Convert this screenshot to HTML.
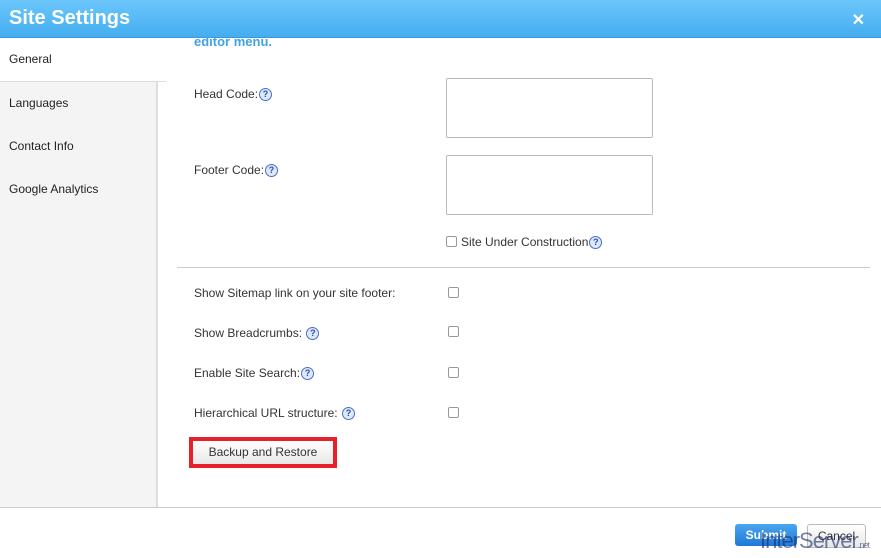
<!DOCTYPE html>
<html><head><style>
body{margin:0;width:881px;height:557px;position:relative;overflow:hidden;font-family:"Liberation Sans",sans-serif;background:#fff;font-size:12px;color:#333}
.hdr{position:absolute;left:0;top:0;width:881px;height:37px;background:linear-gradient(#6cc6fb,#44aef0);border-bottom:1px solid #3a9ad8}
.hdr .t{position:absolute;left:9px;top:7px;font-size:20px;font-weight:bold;color:#fff}
.hdr .x{position:absolute;right:16px;top:10px;font-size:16px;font-weight:bold;color:#fff}
.side{position:absolute;left:0;top:38px;width:156px;height:469px;background:#f4f4f4;border-right:2px solid #ddd}
.tab{height:43px;line-height:43px;padding-left:9px;font-size:12px;color:#222}
.tab.a{background:#fff;border-bottom:1px solid #ddd;width:157px}
.a2{position:absolute;font-size:12px;color:#333}
.q{display:inline-block;width:11px;height:11px;border-radius:50%;border:1px solid #4a6fc0;background:#dde8ff;color:#2a4fa0;font-size:9px;line-height:11px;text-align:center;font-weight:bold;vertical-align:middle;margin-left:1px}
.ta{position:absolute;left:446px;width:205px;height:58px;border:1px solid #bbb;border-radius:2px}
.cb{position:absolute;width:9px;height:9px;border:1px solid #999;border-radius:2px;background:#fff}
.foot{position:absolute;left:0;top:507px;width:881px;height:50px;border-top:1px solid #ccc;background:#fff}
</style></head><body>
<div class="hdr"><div class="t">Site Settings</div><div class="x">✕</div></div>
<div class="side">
<div class="tab a">General</div>
<div class="tab">Languages</div>
<div class="tab">Contact Info</div>
<div class="tab">Google Analytics</div>
</div>
<div class="a2" style="left:194px;top:34px;color:#3ea3e6;font-weight:bold;font-size:13px">editor menu.</div>
<div class="a2" style="left:194px;top:87px">Head Code:<span class="q">?</span></div>
<div class="ta" style="top:78px"></div>
<div class="a2" style="left:194px;top:163px">Footer Code:<span class="q">?</span></div>
<div class="ta" style="top:155px"></div>
<div class="cb" style="left:446px;top:236px"></div>
<div class="a2" style="left:461px;top:235px">Site Under Construction<span class="q">?</span></div>
<div style="position:absolute;left:177px;top:267px;width:693px;height:1px;background:#ccc"></div>
<div class="a2" style="left:194px;top:286px">Show Sitemap link on your site footer:</div>
<div class="cb" style="left:448px;top:287px"></div>
<div class="a2" style="left:194px;top:326px">Show Breadcrumbs: <span class="q">?</span></div>
<div class="cb" style="left:448px;top:326px"></div>
<div class="a2" style="left:194px;top:366px">Enable Site Search:<span class="q">?</span></div>
<div class="cb" style="left:448px;top:367px"></div>
<div class="a2" style="left:194px;top:406px">Hierarchical URL structure: <span class="q">?</span></div>
<div class="cb" style="left:448px;top:407px"></div>
<div style="position:absolute;left:189px;top:437px;width:140px;height:23px;border:4px solid #e8202a;background:linear-gradient(#fff,#e8e8e8);text-align:center;line-height:23px;font-size:12px;color:#333">Backup and Restore</div>
<div class="foot"></div>
<div style="position:absolute;left:735px;top:524px;width:62px;height:22px;border-radius:3px;background:linear-gradient(#4aa6f0,#1f78d6);color:#fff;font-weight:bold;text-align:center;line-height:22px;font-size:12px">Submit</div>
<div style="position:absolute;left:807px;top:524px;width:57px;height:22px;border-radius:3px;border:1px solid #bbb;background:linear-gradient(#fff,#e6e6e6);color:#333;text-align:center;line-height:22px;font-size:12px">Cancel</div>
<div style="position:absolute;left:760px;top:528px;font-size:22px;color:#1a2a6a;opacity:.6;letter-spacing:-1px">InterServer<span style="font-size:9px">.net</span></div>
</body></html>
